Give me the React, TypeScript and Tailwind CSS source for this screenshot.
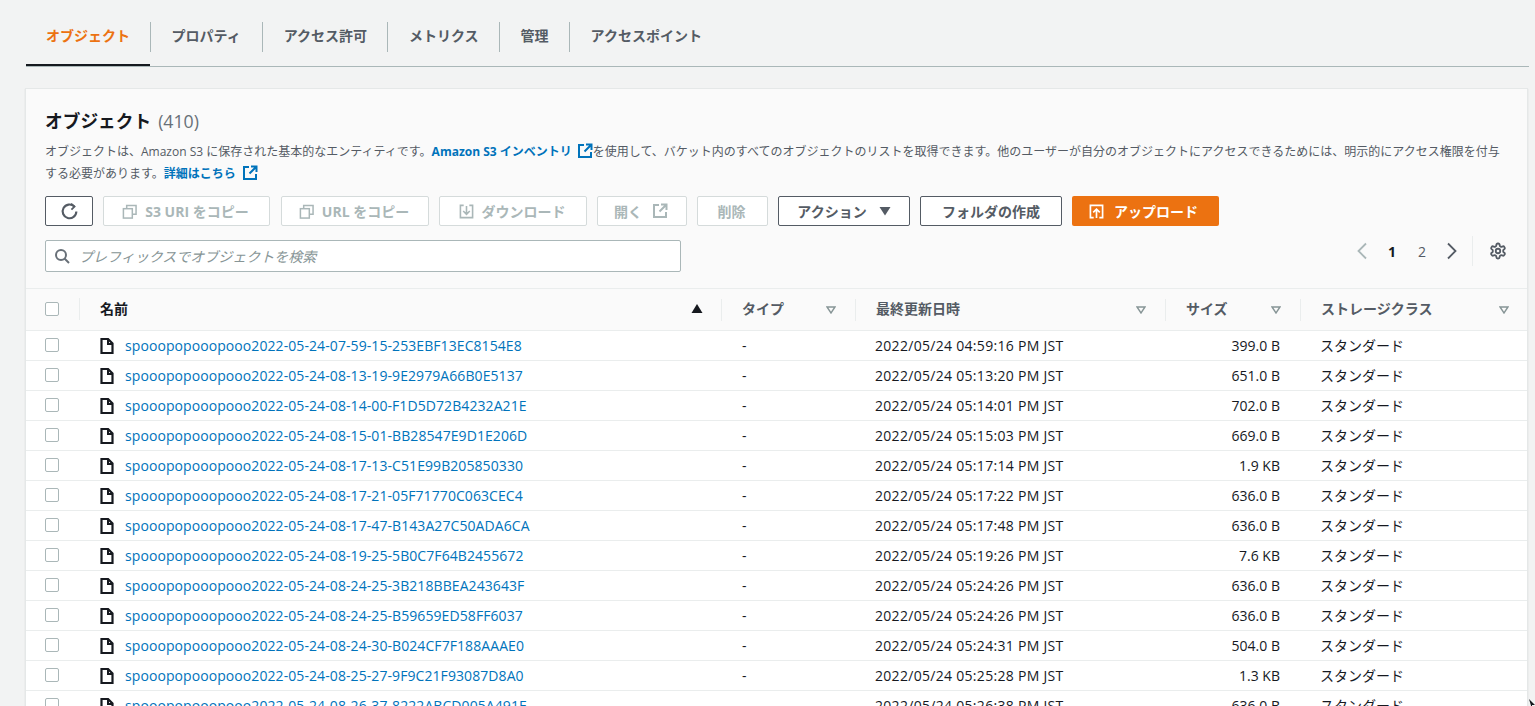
import React from "react";

const rows: [string, string, string][] = [
  ["07-59-15-253EBF13EC8154E8", "04:59:16", "399.0 B"],
  ["08-13-19-9E2979A66B0E5137", "05:13:20", "651.0 B"],
  ["08-14-00-F1D5D72B4232A21E", "05:14:01", "702.0 B"],
  ["08-15-01-BB28547E9D1E206D", "05:15:03", "669.0 B"],
  ["08-17-13-C51E99B205850330", "05:17:14", "1.9 KB"],
  ["08-17-21-05F71770C063CEC4", "05:17:22", "636.0 B"],
  ["08-17-47-B143A27C50ADA6CA", "05:17:48", "636.0 B"],
  ["08-19-25-5B0C7F64B2455672", "05:19:26", "7.6 KB"],
  ["08-24-25-3B218BBEA243643F", "05:24:26", "636.0 B"],
  ["08-24-25-B59659ED58FF6037", "05:24:26", "636.0 B"],
  ["08-24-30-B024CF7F188AAAE0", "05:24:31", "504.0 B"],
  ["08-25-27-9F9C21F93087D8A0", "05:25:28", "1.3 KB"],
  ["08-26-37-8222ABCD005A491F", "05:26:38", "636.0 B"],
];

const FONT = "font-['Open_Sans','Noto_Sans_CJK_JP',sans-serif]";
const COLS = "grid grid-cols-[695px_134px_310px_135px_228px]";

const Ext = ({ c = "#0073bb", s = 16 }: { c?: string; s?: number }) => (
  <svg width={s} height={s} viewBox="0 0 16 16" fill="none" stroke={c} strokeWidth="2" className="shrink-0">
    <path d="M7 2H2v12h12V9" />
    <path d="M9 1.500h5.500V7M14 2L7.500 8.500" />
  </svg>
);
const Copy = () => (
  <svg width="15" height="15" viewBox="0 0 16 16" fill="none" stroke="#aab7b8" strokeWidth="1.600" className="shrink-0">
    <rect x="1.500" y="5" width="9.500" height="10" />
    <path d="M5 5V1.500h10V11h-4" />
  </svg>
);
const Check = () => <span className="block w-[14px] h-[14px] rounded-[2px] border border-[#aab7b8] bg-white" />;
const Filt = () => (
  <svg width="10" height="8" viewBox="0 0 10 8" fill="none" stroke="#879596" strokeWidth="1.400" className="shrink-0">
    <path d="M1 1h8L5 7z" />
  </svg>
);
const FileI = () => (
  <svg width="14" height="16" viewBox="0 0 14 16" fill="none" stroke="#16191f" strokeWidth="2.200" className="shrink-0">
    <path d="M1.500 1h6.500l4.500 4.500V15h-11z" />
    <path d="M8 1v5h4.500" strokeWidth="2" />
  </svg>
);

const Dis = ({ w, children, cls = "" }: { w: string; children: React.ReactNode; cls?: string }) => (
  <div className={`${w} ${cls} h-[30px] shrink-0 flex items-center justify-center gap-[8px] pr-[2px] rounded-[2px] border border-[#d5dbdb] bg-white text-[14px] font-bold text-[#aab7b8]`}>
    {children}
  </div>
);
const Nrm = ({ w, children }: { w: string; children: React.ReactNode }) => (
  <div className={`${w} h-[30px] shrink-0 flex items-center justify-center gap-[12px] rounded-[2px] border border-[#545b64] bg-white text-[14px] font-bold text-[#545b64]`}>
    {children}
  </div>
);
const Head = ({ t }: { t: string }) => (
  <div className="flex items-center justify-between h-[22px] pl-[20px] pr-[19px] border-l border-[#eaeded]">
    <span className="text-[14px] font-bold text-[#545b64] mb-[2px]">{t}</span>
    <Filt />
  </div>
);

export default function App() {
  const tabs = ["プロパティ", "アクセス許可", "メトリクス", "管理", "アクセスポイント"];
  return (
    <div className={`${FONT} h-[706px] w-[1535px] overflow-hidden bg-[#f2f3f3] relative`}>
      <div className="ml-[26px] mr-[6px] pt-[20px]">
        <div className="flex h-[47px] border-b border-[#aab7b8] items-start pt-[2px]">
          <div className="w-[124px] h-[44px] border-b-2 border-[#16191f] flex items-start">
            <div className="pl-[20px] h-[30px] pb-[3px] flex items-center text-[14px] font-bold text-[#ec7211]">オブジェクト</div>
          </div>
          {tabs.map((t) => (
            <div key={t} className="h-[30px] pb-[3px] flex items-center border-l border-[#aab7b8] px-[20.500px] [&:nth-child(2)]:pr-[21.500px] text-[14px] font-bold text-[#545b64]">
              {t}
            </div>
          ))}
        </div>
      </div>

      <div className="ml-[25px] mr-[7px] mt-[21px] bg-white border border-[#e5e8e8] shadow-[0_1px_1px_rgba(0,28,36,0.15)]">
        <div className="bg-[#fafafa] border-b border-[#eaeded] pl-[19px] pr-[20px] pt-[19px] h-[200px]">
          <div className="flex items-baseline gap-[7px] h-[26px]">
            <span className="text-[17.700px] font-bold text-[#16191f]">オブジェクト</span>
            <span className="text-[17.700px] text-[#687078]">(410)</span>
          </div>
          <p className="mt-[7px] text-[12px] leading-[22px] text-[#545b64]">
            オブジェクトは、Amazon S3 に保存された基本的なエンティティです。
            <span className="font-bold text-[#0073bb]">Amazon S3 インベントリ</span>
            <span className="inline-block align-[-3px] ml-[5px]"><Ext /></span>
            を使用して、バケット内のすべてのオブジェクトのリストを取得できます。他のユーザーが自分のオブジェクトにアクセスできるためには、明示的にアクセス権限を付与する必要があります。
            <span className="font-bold text-[#0073bb]">詳細はこちら</span>
            <span className="inline-block align-[-3px] ml-[6px]"><Ext /></span>
          </p>

          <div className="mt-[11px] flex gap-[10px]">
            <div className="w-[48px] h-[30px] shrink-0 flex items-center justify-center rounded-[2px] border border-[#545b64] bg-white">
              <svg width="19" height="19" viewBox="0 0 18 18" fill="none" stroke="#545b64" strokeWidth="2">
                <path d="M13.500 4.200A6.500 6.500 0 1 0 15.500 9" />
                <path d="M10.500 1.500l3.300 2.800-3 3" strokeWidth="1.700" />
              </svg>
            </div>
            <Dis w="w-[167px]"><Copy />S3 URI をコピー</Dis>
            <Dis w="w-[148px]" cls="ml-[1px]"><Copy />URL をコピー</Dis>
            <Dis w="w-[148px]">
              <svg width="15" height="15" viewBox="0 0 16 16" fill="none" stroke="#aab7b8" strokeWidth="1.700" className="shrink-0">
                <path d="M5 1.500H1.500v13h13v-13H11M8 2v8.500M4.500 7.500L8 11l3.500-3.500" />
              </svg>
              ダウンロード
            </Dis>
            <Dis w="w-[90px]">開く<span className="ml-[2px]"><Ext c="#aab7b8" /></span></Dis>
            <Dis w="w-[71px]">削除</Dis>
            <Nrm w="w-[132px]">
              アクション
              <svg width="12" height="10" viewBox="0 0 12 10" fill="#545b64"><path d="M0.500 1h11L6 9.500z" /></svg>
            </Nrm>
            <Nrm w="w-[142px]">フォルダの作成</Nrm>
            <div className="w-[147px] h-[30px] shrink-0 flex items-center justify-center gap-[10px] pr-[4px] rounded-[2px] bg-[#ec7211] text-[14px] font-bold text-white">
              <svg width="15" height="15" viewBox="0 0 16 16" fill="none" stroke="#fff" strokeWidth="1.800" className="shrink-0">
                <path d="M5 14.500H1.500v-13h13v13H11M8 15V6M4.500 9L8 5.500 11.500 9" />
              </svg>
              アップロード
            </div>
          </div>

          <div className="mt-[14px] flex items-start justify-between">
            <div className="w-[636px] h-[32px] flex items-center gap-[9px] pl-[8px] border border-[#aab7b8] rounded-[2px] bg-white">
              <svg width="16" height="16" viewBox="0 0 16 16" fill="none" stroke="#687078" strokeWidth="2">
                <circle cx="7" cy="7" r="5" />
                <path d="M10.500 10.500L15 15" />
              </svg>
              <span className="text-[14px] italic text-[#879596]">プレフィックスでオブジェクトを検索</span>
            </div>
            <div className="flex items-center h-[32px] -mt-[5px]">
              <svg width="12" height="18" viewBox="0 0 12 18" fill="none" stroke="#aab7b8" strokeWidth="1.800" className="mr-[20px]">
                <path d="M10 1.500L2.500 9l7.500 7.500" />
              </svg>
              <span className="w-[8px] text-[14px] font-bold text-[#16191f] text-center">1</span>
              <span className="w-[8px] ml-[22px] text-[14px] text-[#545b64] text-center">2</span>
              <svg width="12" height="18" viewBox="0 0 12 18" fill="none" stroke="#545b64" strokeWidth="1.800" className="ml-[20px]">
                <path d="M2 1.500L9.500 9 2 16.500" />
              </svg>
              <span className="w-px h-[30px] bg-[#eaeded] ml-[14px]" />
              <svg width="18" height="18" viewBox="0 0 24 24" fill="none" stroke="#545b64" strokeWidth="2.400" strokeLinecap="round" strokeLinejoin="round" className="ml-[16px]">
                <path d="M12.220 2h-.44a2 2 0 0 0-2 2v.18a2 2 0 0 1-1 1.730l-.43.250a2 2 0 0 1-2 0l-.15-.080a2 2 0 0 0-2.730.730l-.22.380a2 2 0 0 0 .73 2.730l.15.100a2 2 0 0 1 1 1.720v.510a2 2 0 0 1-1 1.740l-.15.090a2 2 0 0 0-.73 2.730l.22.380a2 2 0 0 0 2.730.730l.15-.080a2 2 0 0 1 2 0l.43.250a2 2 0 0 1 1 1.730V20a2 2 0 0 0 2 2h.44a2 2 0 0 0 2-2v-.18a2 2 0 0 1 1-1.730l.43-.250a2 2 0 0 1 2 0l.15.080a2 2 0 0 0 2.730-.730l.22-.390a2 2 0 0 0-.73-2.730l-.15-.080a2 2 0 0 1-1-1.740v-.500a2 2 0 0 1 1-1.740l.15-.090a2 2 0 0 0 .73-2.730l-.22-.380a2 2 0 0 0-2.730-.730l-.15.080a2 2 0 0 1-2 0l-.43-.250a2 2 0 0 1-1-1.730V4a2 2 0 0 0-2-2z" />
                <circle cx="12" cy="12" r="3" />
              </svg>
            </div>
          </div>
        </div>

        <div className={`${COLS} h-[42px] items-center bg-[#fafafa] border-b border-[#eaeded]`}>
          <div className="flex items-center pl-[19px] pb-[2px]">
            <Check />
            <span className="w-px h-[22px] bg-[#eaeded] ml-[20px]" />
            <span className="ml-[20px] text-[14px] font-bold text-[#16191f]">名前</span>
            <svg width="12" height="9" viewBox="0 0 12 9" fill="#16191f" className="ml-auto mr-[18px]"><path d="M6 0l5.500 9H.5z" /></svg>
          </div>
          <Head t="タイプ" />
          <Head t="最終更新日時" />
          <Head t="サイズ" />
          <Head t="ストレージクラス" />
        </div>

        {rows.map(([id, time, size]) => (
          <div key={id} className={`${COLS} h-[30px] items-center border-b border-[#eaeded] bg-white text-[14px] text-[#16191f]`}>
            <div className="flex items-center pl-[19px]">
              <span className="mb-[1px]"><Check /></span>
              <span className="ml-[41px]"><FileI /></span>
              <span className="ml-[11px] text-[#0073bb] tracking-[0.08px]">spooopopooopooo2022-05-24-{id}</span>
            </div>
            <div className="pl-[21px]">-</div>
            <div className="pl-[20px] tracking-[0.3px]">2022/05/24 {time} PM JST</div>
            <div className="text-right pr-[20px]">{size}</div>
            <div className="pl-[20px]">スタンダード</div>
          </div>
        ))}
      </div>

      <svg width="6" height="10" viewBox="0 0 6 10" fill="#16191f" className="absolute left-[1529px] top-[699px]">
        <path d="M0 0l6 6H3v4z" />
      </svg>
    </div>
  );
}
